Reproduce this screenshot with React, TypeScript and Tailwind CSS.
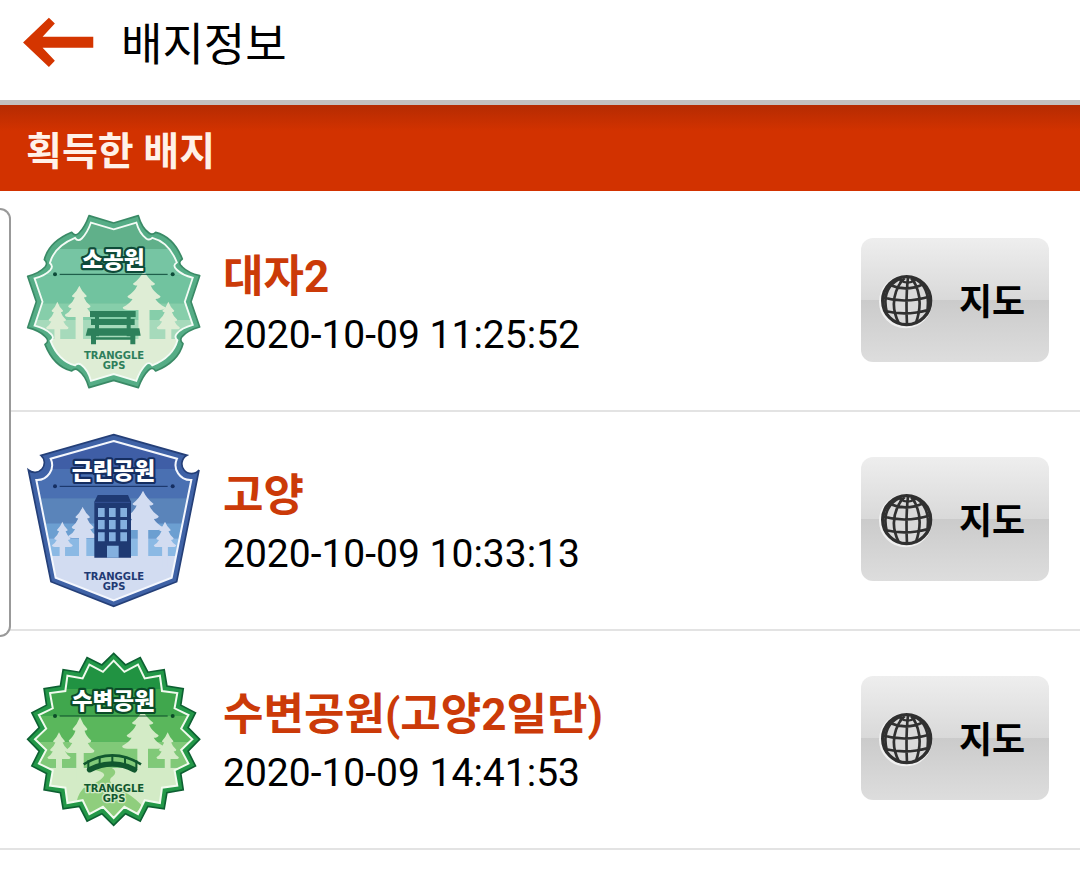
import React from 'react';

type BadgeKind = 'small' | 'neighborhood' | 'waterside';

interface Badge {
  id: number;
  kind: BadgeKind;
  name: string;
  acquiredAt: string;
}

const badges: Badge[] = [
  { id: 1, kind: 'small', name: '대자2', acquiredAt: '2020-10-09 11:25:52' },
  { id: 2, kind: 'neighborhood', name: '고양', acquiredAt: '2020-10-09 10:33:13' },
  { id: 3, kind: 'waterside', name: '수변공원(고양2일단)', acquiredAt: '2020-10-09 14:41:53' },
];

// Star outline around (0, 0), first tip pointing up
const starPath = (tips: number, outer: number, inner: number) => {
  const points = Array.from({ length: tips * 2 }, (_, i) => {
    const radius = i % 2 === 0 ? outer : inner;
    const angle = (i * Math.PI) / tips;
    return `${(radius * Math.sin(angle)).toFixed(1)} ${(-radius * Math.cos(angle)).toFixed(1)}`;
  });
  return `M${points.join('L')}Z`;
};

const FRAME_SMALL =
  'M0 -236L74 -258Q84 -222 106 -206Q116 -198 126 -208Q180 -194 206 -128Q190 -118 206 -104Q224 -86 258 -78L232 0' +
  'L258 76Q222 86 206 104Q196 116 208 126Q194 180 126 208Q116 194 104 206Q86 224 74 258L0 236' +
  'L-74 258Q-84 222 -106 206Q-116 198 -126 208Q-180 194 -206 128Q-190 118 -206 104Q-224 86 -258 78L-232 0' +
  'L-258 -76Q-222 -86 -206 -104Q-196 -116 -208 -126Q-194 -180 -126 -208Q-116 -194 -104 -206Q-86 -224 -74 -258Z';

const FRAME_SHIELD =
  'M296 29L516 91A29 29 0 1 0 552 135L485 470L296 544L108 470L40 135A29 29 0 1 0 78 91Z';
const FRAME_SHIELD_INNER =
  'M296 48L486 101A45 45 0 0 0 529 165L470 458L296 526L122 458L64 165A45 45 0 0 0 107 101Z';

const FRAME_STAR = starPath(20, 258, 226);
const FRAME_STAR_INNER = starPath(20, 236, 205);

const Tree: React.FC<{ x: number; y: number; w: number; h: number }> = ({ x, y, w, h }) => (
  <path
    transform={`translate(${x} ${y}) scale(${w} ${h})`}
    d="M0 0Q10 20 28 33Q28 37 17 38Q24 54 42 65Q42 71 29 72Q36 84 54 93Q54 100 40 100H14V180H-14V100H-40Q-54 100 -54 93Q-36 84 -29 72Q-42 71 -42 65Q-24 54 -17 38Q-28 37 -28 33Q-10 20 0 0Z"
  />
);

interface LabelProps {
  title: string;
  titleY: number;
  lineY: number;
  brandY: number;
  dark: string;
  brand: string;
  halo: string;
}

const BadgeLabel: React.FC<LabelProps> = ({ title, titleY, lineY, brandY, dark, brand, halo }) => (
  <>
    <path d={`M134 ${lineY}H458`} stroke={dark} strokeWidth="3" />
    <circle cx="120" cy={lineY} r="6" fill={dark} />
    <circle cx="473" cy={lineY} r="6" fill={dark} />
    <g textAnchor="middle" className="font-['Noto_Sans_CJK_KR',sans-serif] font-black">
      <text x="295" y={titleY} fontSize="68" fill="#fff" stroke={dark} strokeWidth="13" strokeLinejoin="round" paintOrder="stroke">
        {title}
      </text>
    </g>
    <g
      textAnchor="middle"
      fill={brand}
      stroke={halo}
      strokeWidth="8"
      strokeLinejoin="round"
      paintOrder="stroke"
      className="font-['DejaVu_Sans',sans-serif] font-bold"
    >
      <text x="297" y={brandY} fontSize="30">TRANGGLE</text>
      <text x="297" y={brandY + 30} fontSize="30">GPS</text>
    </g>
  </>
);

const SmallParkBadge = () => (
  <svg viewBox="30 24 540 540" className="mt-0.5 size-[180px] shrink-0" role="img" aria-label="소공원">
    <defs>
      <clipPath id="clip-small">
        <path d={FRAME_SMALL} transform="translate(296 290) scale(.92)" />
      </clipPath>
    </defs>
    <path d={FRAME_SMALL} transform="translate(296 290)" fill="#55ad86" stroke="#3a8a66" strokeWidth="5" strokeLinejoin="round" />
    <g clipPath="url(#clip-small)">
      <path fill="#60b08a" d="M30 24h540v108H30z" />
      <path fill="#76c5a3" d="M30 132h540v80H30z" />
      <path fill="#71c39f" d="M30 212h540v83H30z" />
      <path fill="#86ceaa" d="M30 295h540v50H30z" />
      <path fill="#a6dabb" d="M30 345h540v57H30z" />
      <path fill="#deedd5" d="M30 402h540v162H30z" />
      <g fill="#deedd5">
        <Tree x={387} y={197} w={1.18} h={1.18} />
        <Tree x={193} y={242} w={0.8} h={0.94} />
        <Tree x={127} y={290} w={0.62} h={0.83} />
        <Tree x={460} y={290} w={0.64} h={0.83} />
      </g>
    </g>
    <path d={FRAME_SMALL} transform="translate(296 290) scale(.92)" fill="none" stroke="#f3fbf5" strokeWidth="6" />
    {/* bench */}
    <path
      fill="#2d805b"
      d="M225 318h137v18H225zM228 342h131v18H228zM218 370h155l4 22H212zM228 392h15v26h-15zM346 392h15v26h-15zM240 318h12v76h-12zM335 318h12v76h-12zM242 397h104v7H242z"
    />
    <BadgeLabel title="소공원" titleY={189} lineY={208} brandY={463} dark="#0e4b39" brand="#2d7e5b" halo="#deedd5" />
  </svg>
);

const NeighborhoodParkBadge = () => (
  <svg viewBox="30 21 540 540" className="mt-0.5 size-[180px] shrink-0" role="img" aria-label="근린공원">
    <defs>
      <clipPath id="clip-shield">
        <path d={FRAME_SHIELD_INNER} />
      </clipPath>
    </defs>
    <path d={FRAME_SHIELD} fill="#3f62a6" stroke="#243f78" strokeWidth="5" />
    <g clipPath="url(#clip-shield)">
      <path fill="#3f5ea6" d="M30 21h540v111H30z" />
      <path fill="#4a70b2" d="M30 132h540v88H30z" />
      <path fill="#5a84ba" d="M30 220h540v75H30z" />
      <path fill="#6c9fd1" d="M30 295h540v45H30z" />
      <path fill="#8bb9e4" d="M30 340h540v53H30z" />
      <path fill="#d2dcf1" d="M30 393h540v168H30z" />
      <g fill="#d2dcf1">
        <Tree x={384} y={197} w={1.12} h={1.18} />
        <Tree x={203} y={245} w={0.78} h={0.94} />
        <Tree x={142} y={290} w={0.58} h={0.76} />
        <Tree x={450} y={290} w={0.62} h={0.76} />
      </g>
    </g>
    <path d={FRAME_SHIELD_INNER} fill="none" stroke="#f4f7fd" strokeWidth="6" />
    {/* apartment block */}
    <path fill="#1f3a73" d="M248 210h91l9 20v168H238V230z" />
    <path stroke="#3f5ea6" strokeWidth="2" d="M240 232h106" />
    <path
      fill="#84b0df"
      d="M249 249h20v27h-20zM282 249h20v27h-20zM316 249h20v27h-20zM249 285h20v28h-20zM282 285h20v28h-20zM316 285h20v28h-20zM249 322h20v27h-20zM282 322h20v27h-20zM316 322h20v27h-20zM276 362h35v36h-35z"
    />
    <BadgeLabel title="근린공원" titleY={162} lineY={184} brandY={466} dark="#152e61" brand="#1f3a73" halo="#d2dcf1" />
  </svg>
);

const WatersideParkBadge = () => (
  <svg viewBox="30 18 540 540" className="mt-0.5 size-[180px] shrink-0" role="img" aria-label="수변공원">
    <defs>
      <clipPath id="clip-star">
        <path d={FRAME_STAR_INNER} transform="translate(296 283)" />
      </clipPath>
    </defs>
    <path d={FRAME_STAR} transform="translate(296 283)" fill="#239848" stroke="#0d6032" strokeWidth="5" />
    <g clipPath="url(#clip-star)">
      <path fill="#219342" d="M30 18h540v114H30z" />
      <path fill="#40a74d" d="M30 132h540v80H30z" />
      <path fill="#5ab75c" d="M30 212h540v78H30z" />
      <path fill="#80c978" d="M30 290h540v78H30z" />
      <path fill="#d3ebc6" d="M30 368h540v190H30z" />
      {/* stream running under the bridge */}
      <path fill="#8fce7d" d="M224 366H282Q312 376 294 394Q270 408 310 430Q350 450 382 482L340 530H190Q170 470 205 430Q262 408 268 390Q266 376 224 374Z" />
      <g fill="#d3ebc6">
        <Tree x={383} y={195} w={1.14} h={1.16} />
        <Tree x={195} y={216} w={0.8} h={1.08} />
        <Tree x={132} y={262} w={0.64} h={0.8} />
        <Tree x={458} y={262} w={0.62} h={0.8} />
      </g>
    </g>
    <path d={FRAME_STAR_INNER} transform="translate(296 283)" fill="none" stroke="#f1faee" strokeWidth="6" />
    <g fill="none" stroke="#11582f">
      <path strokeWidth="17" strokeLinecap="round" d="M224 374Q292 340 358 374" />
      <path strokeWidth="8" d="M206 358Q292 304 378 358" />
      <path strokeWidth="6" d="M220 346V374M254 334V362M292 330V358M330 334V362M364 346V374" />
    </g>
    <BadgeLabel title="수변공원" titleY={193} lineY={213} brandY={441} dark="#0b4c28" brand="#11582f" halo="#d3ebc6" />
  </svg>
);

const badgeArt: Record<BadgeKind, React.FC> = {
  small: SmallParkBadge,
  neighborhood: NeighborhoodParkBadge,
  waterside: WatersideParkBadge,
};

const GlobeIcon = () => (
  <svg viewBox="88 130 168 168" className="size-14" fill="none" aria-hidden="true">
    <circle cx="168" cy="216" r="76" fill="#d9d9d9" stroke="#f0f0f0" strokeWidth="8" />
    <g stroke="#303030">
      <circle cx="171" cy="213" r="72" strokeWidth="10" />
      <path
        strokeWidth="8"
        d="M175 144Q168 200 172 286M160 148Q112 212 148 282M188 148Q226 206 198 282M154 146Q92 174 112 250M192 146Q246 170 232 250M121 166Q170 188 222 163M97 203Q170 224 244 199M106 244Q170 260 238 240"
      />
      <path strokeWidth="7" d="M150 150Q174 168 198 150M165 146L150 160M184 146L196 160" />
    </g>
  </svg>
);

const BadgeRow: React.FC<{ badge: Badge }> = ({ badge }) => {
  const Art = badgeArt[badge.kind];

  return (
    <li className="flex h-[219px] items-center border-b-2 border-[#e3e3e3] pr-[31px] pl-[25px]">
      <Art />
      <div className="ml-[18px] min-w-0 flex-1 pt-2">
        <h2 className="text-[44px] leading-[58px] font-bold text-[#cb3a08]">{badge.name}</h2>
        <p className="text-[39px] leading-[58px] text-black">{badge.acquiredAt}</p>
      </div>
      <button
        type="button"
        className="mb-1 flex h-[124px] w-[188px] shrink-0 items-center rounded-xl bg-[linear-gradient(#eeeeee,#d9d9d9_50%,#cbcbcb_50%,#dddddd)] pt-[3px] pl-[18px] text-[36px] font-bold text-black"
      >
        <GlobeIcon />
        <span className="ml-6 pt-1">지도</span>
      </button>
    </li>
  );
};

export default function App() {
  return (
    <div className="min-h-screen bg-white font-[Roboto,'Noto_Sans_CJK_KR',sans-serif]">
      <header className="flex h-[105px] items-center border-b-[5px] border-[#c3c0c0] pb-4 pl-[22px]">
        <button type="button" aria-label="뒤로">
          <svg viewBox="66 50 218 154" className="h-[51px] w-[73px]" aria-hidden="true">
            <path fill="#d43500" d="M68 127L146 52L164 70L127 110H280V143H127L164 182L146 201Z" />
          </svg>
        </button>
        <h1 className="ml-[26px] pt-1.5 text-[45px] leading-none text-black">배지정보</h1>
      </header>

      <main>
        <h2 className="flex h-[86px] items-center bg-linear-to-b from-[#b52b02] to-[#d23200] to-30% pt-2 pl-[26px] text-[39px] font-bold text-[#fff1e8]">
          획득한 배지
        </h2>
        <div className="relative pt-0.5">
          <ul>
            {badges.map((badge) => (
              <BadgeRow key={badge.id} badge={badge} />
            ))}
          </ul>
          {/* edge panel handle */}
          <div className="absolute top-[17px] left-0 h-[429px] w-[11px] rounded-r-xl border-y-2 border-r-2 border-[#999] bg-white" />
        </div>
      </main>
    </div>
  );
}
